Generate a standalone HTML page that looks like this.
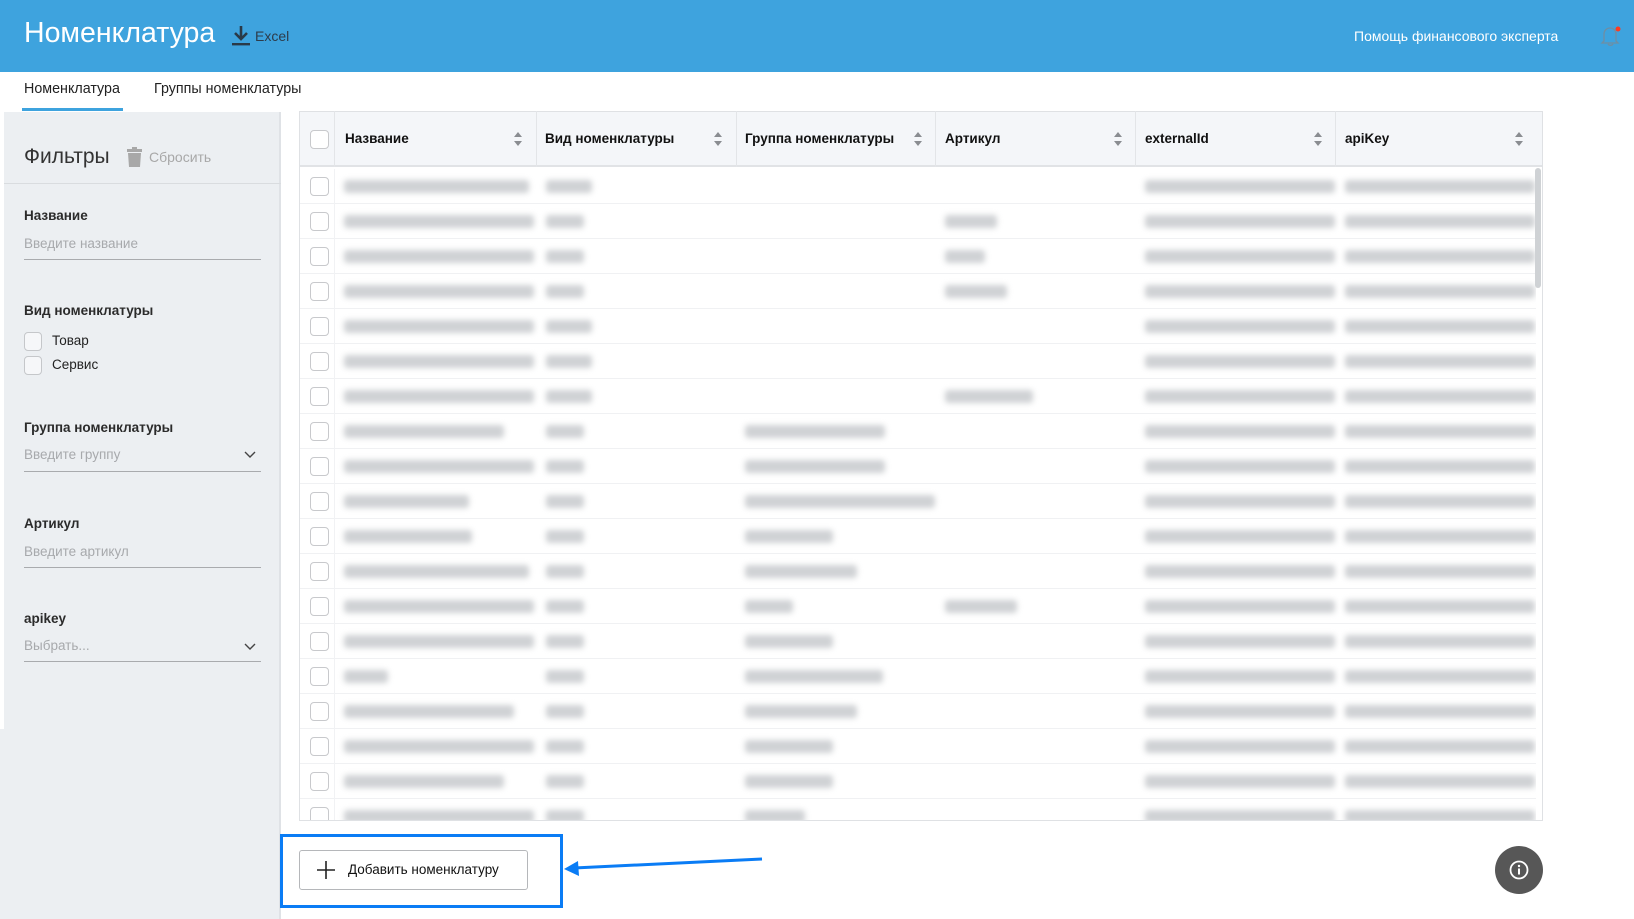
<!DOCTYPE html>
<html><head><meta charset="utf-8"><style>
*{box-sizing:border-box;margin:0;padding:0}
body{width:1634px;height:919px;position:relative;overflow:hidden;background:#fff;font-family:"Liberation Sans","DejaVu Sans",sans-serif;color:#222}
.a{position:absolute}
.hdr{left:0;top:0;width:1634px;height:72px;background:#3ea3de}
.lbl{font-size:13.5px;font-weight:bold;color:#2b2b2b}
.ph{font-size:13.5px;color:#a7a9ac}
.ul{height:1px;background:#a9abae;width:237px;left:24px}
.cb{width:19px;height:19px;border:1.5px solid #c8c9cc;border-radius:4px;background:#fff}
.sb{width:18px;height:19px;border:1.5px solid #c5c7ca;border-radius:4px;background:#f6f7f9}
.th{font-size:13.5px;font-weight:bold;color:#111;top:131px}
.sort{width:10px;height:16px;top:131px}
.bar{position:absolute;height:13px;background:#a9adb2;filter:blur(3px);opacity:.55;border-radius:3px}
.vl{position:absolute;top:111px;width:1px;height:56px;background:#e3e5e8}
</style></head><body>
<div class="a hdr"></div>
<div class="a" style="left:24px;top:17px;font-size:28.5px;color:#fff">Номенклатура</div>
<svg class="a" style="left:230px;top:25px" width="22" height="22" viewBox="0 0 22 22"><path d="M11 1v13M5 8l6 6 6-6" stroke="#2a3a48" stroke-width="2.6" fill="none"/><rect x="2" y="18" width="18" height="2.4" fill="#2a3a48"/></svg>
<div class="a" style="left:255px;top:28px;font-size:14px;color:#2d3c4b">Excel</div>
<div class="a" style="left:1354px;top:28px;font-size:14px;color:#fff">Помощь финансового эксперта</div>
<svg class="a" style="left:1600px;top:24px" width="22" height="24" viewBox="0 0 22 24"><path d="M4 17V10a6 6 0 0 1 12 0v7l2 2H2z M8 20a3 3 0 0 0 5 0" stroke="#6f8ea3" stroke-width="1.3" fill="none"/><circle cx="18" cy="5" r="2.5" fill="#ff3b1f"/></svg>

<div class="a" style="left:24px;top:81px;font-size:14.3px;color:#222">Номенклатура</div>
<div class="a" style="left:22px;top:108px;width:101px;height:3px;background:#3ea3de"></div>
<div class="a" style="left:154px;top:81px;font-size:14.3px;color:#222">Группы номенклатуры</div>

<div class="a" style="left:0;top:112px;width:281px;height:807px;background:#eceff2;border-right:2px solid #dfe2e6"></div>
<div class="a" style="left:0;top:112px;width:4px;height:617px;background:#fff"></div>
<div class="a" style="left:24px;top:145px;font-size:21px;color:#333">Фильтры</div>
<svg class="a" style="left:126px;top:147px" width="17" height="20" viewBox="0 0 17 20"><rect x="1" y="2" width="15" height="3" fill="#a8a8a8"/><rect x="6" y="0" width="5" height="2" fill="#a8a8a8"/><path d="M2 6h13l-1 14H3z" fill="#a8a8a8"/></svg>
<div class="a" style="left:149px;top:149px;font-size:14px;color:#a8a8a8">Сбросить</div>
<div class="a" style="left:4px;top:183px;width:277px;height:1px;background:#d9dcdf"></div>

<div class="a lbl" style="left:24px;top:208px">Название</div>
<div class="a ph" style="left:24px;top:236px">Введите название</div>
<div class="a ul" style="top:259px"></div>
<div class="a lbl" style="left:24px;top:303px">Вид номенклатуры</div>
<div class="a sb" style="left:24px;top:332px"></div><div class="a" style="left:52px;top:333px;font-size:13.5px">Товар</div>
<div class="a sb" style="left:24px;top:356px"></div><div class="a" style="left:52px;top:357px;font-size:13.5px">Сервис</div>
<div class="a lbl" style="left:24px;top:420px">Группа номенклатуры</div>
<div class="a ph" style="left:24px;top:447px">Введите группу</div>
<svg class="a" style="left:244px;top:451px" width="12" height="8"><path d="M1 1l5 5 5-5" stroke="#444" stroke-width="1.4" fill="none"/></svg>
<div class="a ul" style="top:471px"></div>
<div class="a lbl" style="left:24px;top:516px">Артикул</div>
<div class="a ph" style="left:24px;top:544px">Введите артикул</div>
<div class="a ul" style="top:567px"></div>
<div class="a lbl" style="left:24px;top:611px">apikey</div>
<div class="a ph" style="left:24px;top:638px">Выбрать...</div>
<svg class="a" style="left:244px;top:643px" width="12" height="8"><path d="M1 1l5 5 5-5" stroke="#444" stroke-width="1.4" fill="none"/></svg>
<div class="a ul" style="top:661px"></div>

<!-- table -->
<div class="a" style="left:299px;top:111px;width:1244px;height:710px;border:1px solid #dfe1e4;background:#fff;overflow:hidden">
<div class="a" style="left:0;top:0;width:1244px;height:55px;background:#f4f6f9;border-bottom:2px solid #e1e3e6"></div>
</div>
<div class="vl" style="left:334px"></div><div class="vl" style="left:536px"></div><div class="vl" style="left:736px"></div><div class="vl" style="left:935px"></div><div class="vl" style="left:1135px"></div><div class="vl" style="left:1335px"></div>
<div class="a cb" style="left:310px;top:130px"></div>
<div class="a th" style="left:345px">Название</div>
<div class="a th" style="left:545px">Вид номенклатуры</div>
<div class="a th" style="left:745px">Группа номенклатуры</div>
<div class="a th" style="left:945px">Артикул</div>
<div class="a th" style="left:1145px">externalId</div>
<div class="a th" style="left:1345px">apiKey</div>
<svg width="0" height="0" style="position:absolute"><defs><g id="s"><path d="M1 6l4-5 4 5z M1 10l4 5 4-5z" fill="#8a8d91"/></g></defs></svg>
<svg class="a sort" style="left:513px"><use href="#s"/></svg>
<svg class="a sort" style="left:713px"><use href="#s"/></svg>
<svg class="a sort" style="left:913px"><use href="#s"/></svg>
<svg class="a sort" style="left:1113px"><use href="#s"/></svg>
<svg class="a sort" style="left:1313px"><use href="#s"/></svg>
<svg class="a sort" style="left:1514px"><use href="#s"/></svg>

<div class="a" style="left:300px;top:169px;width:1236px;height:651px;overflow:hidden;background:repeating-linear-gradient(to bottom,transparent 0,transparent 34px,#f0f1f3 34px,#f0f1f3 35px)">
<div class="a" style="left:34px;top:0;width:1px;height:700px;background:#f1f2f4"></div>
</div>
<div class="a" style="left:300px;top:169px;width:1236px;height:651px;overflow:hidden" id="rows">
<div style="position:absolute;left:0;top:0">
<div class="a cb" style="left:10px;top:8px"></div><div class="bar" style="left:44px;top:11px;width:185px"></div><div class="bar" style="left:246px;top:11px;width:46px"></div><div class="bar" style="left:845px;top:11px;width:190px"></div><div class="bar" style="left:1045px;top:11px;width:190px"></div>
</div>
<div style="position:absolute;left:0;top:35px">
<div class="a cb" style="left:10px;top:8px"></div><div class="bar" style="left:44px;top:11px;width:190px"></div><div class="bar" style="left:246px;top:11px;width:38px"></div><div class="bar" style="left:645px;top:11px;width:52px"></div><div class="bar" style="left:845px;top:11px;width:190px"></div><div class="bar" style="left:1045px;top:11px;width:190px"></div>
</div>
<div style="position:absolute;left:0;top:70px">
<div class="a cb" style="left:10px;top:8px"></div><div class="bar" style="left:44px;top:11px;width:190px"></div><div class="bar" style="left:246px;top:11px;width:38px"></div><div class="bar" style="left:645px;top:11px;width:40px"></div><div class="bar" style="left:845px;top:11px;width:190px"></div><div class="bar" style="left:1045px;top:11px;width:190px"></div>
</div>
<div style="position:absolute;left:0;top:105px">
<div class="a cb" style="left:10px;top:8px"></div><div class="bar" style="left:44px;top:11px;width:190px"></div><div class="bar" style="left:246px;top:11px;width:38px"></div><div class="bar" style="left:645px;top:11px;width:62px"></div><div class="bar" style="left:845px;top:11px;width:190px"></div><div class="bar" style="left:1045px;top:11px;width:190px"></div>
</div>
<div style="position:absolute;left:0;top:140px">
<div class="a cb" style="left:10px;top:8px"></div><div class="bar" style="left:44px;top:11px;width:190px"></div><div class="bar" style="left:246px;top:11px;width:46px"></div><div class="bar" style="left:845px;top:11px;width:190px"></div><div class="bar" style="left:1045px;top:11px;width:190px"></div>
</div>
<div style="position:absolute;left:0;top:175px">
<div class="a cb" style="left:10px;top:8px"></div><div class="bar" style="left:44px;top:11px;width:190px"></div><div class="bar" style="left:246px;top:11px;width:46px"></div><div class="bar" style="left:845px;top:11px;width:190px"></div><div class="bar" style="left:1045px;top:11px;width:190px"></div>
</div>
<div style="position:absolute;left:0;top:210px">
<div class="a cb" style="left:10px;top:8px"></div><div class="bar" style="left:44px;top:11px;width:190px"></div><div class="bar" style="left:246px;top:11px;width:46px"></div><div class="bar" style="left:645px;top:11px;width:88px"></div><div class="bar" style="left:845px;top:11px;width:190px"></div><div class="bar" style="left:1045px;top:11px;width:190px"></div>
</div>
<div style="position:absolute;left:0;top:245px">
<div class="a cb" style="left:10px;top:8px"></div><div class="bar" style="left:44px;top:11px;width:160px"></div><div class="bar" style="left:246px;top:11px;width:38px"></div><div class="bar" style="left:445px;top:11px;width:140px"></div><div class="bar" style="left:845px;top:11px;width:190px"></div><div class="bar" style="left:1045px;top:11px;width:190px"></div>
</div>
<div style="position:absolute;left:0;top:280px">
<div class="a cb" style="left:10px;top:8px"></div><div class="bar" style="left:44px;top:11px;width:190px"></div><div class="bar" style="left:246px;top:11px;width:38px"></div><div class="bar" style="left:445px;top:11px;width:140px"></div><div class="bar" style="left:845px;top:11px;width:190px"></div><div class="bar" style="left:1045px;top:11px;width:190px"></div>
</div>
<div style="position:absolute;left:0;top:315px">
<div class="a cb" style="left:10px;top:8px"></div><div class="bar" style="left:44px;top:11px;width:125px"></div><div class="bar" style="left:246px;top:11px;width:38px"></div><div class="bar" style="left:445px;top:11px;width:190px"></div><div class="bar" style="left:845px;top:11px;width:190px"></div><div class="bar" style="left:1045px;top:11px;width:190px"></div>
</div>
<div style="position:absolute;left:0;top:350px">
<div class="a cb" style="left:10px;top:8px"></div><div class="bar" style="left:44px;top:11px;width:128px"></div><div class="bar" style="left:246px;top:11px;width:38px"></div><div class="bar" style="left:445px;top:11px;width:88px"></div><div class="bar" style="left:845px;top:11px;width:190px"></div><div class="bar" style="left:1045px;top:11px;width:190px"></div>
</div>
<div style="position:absolute;left:0;top:385px">
<div class="a cb" style="left:10px;top:8px"></div><div class="bar" style="left:44px;top:11px;width:185px"></div><div class="bar" style="left:246px;top:11px;width:38px"></div><div class="bar" style="left:445px;top:11px;width:112px"></div><div class="bar" style="left:845px;top:11px;width:190px"></div><div class="bar" style="left:1045px;top:11px;width:190px"></div>
</div>
<div style="position:absolute;left:0;top:420px">
<div class="a cb" style="left:10px;top:8px"></div><div class="bar" style="left:44px;top:11px;width:190px"></div><div class="bar" style="left:246px;top:11px;width:38px"></div><div class="bar" style="left:445px;top:11px;width:48px"></div><div class="bar" style="left:645px;top:11px;width:72px"></div><div class="bar" style="left:845px;top:11px;width:190px"></div><div class="bar" style="left:1045px;top:11px;width:190px"></div>
</div>
<div style="position:absolute;left:0;top:455px">
<div class="a cb" style="left:10px;top:8px"></div><div class="bar" style="left:44px;top:11px;width:190px"></div><div class="bar" style="left:246px;top:11px;width:38px"></div><div class="bar" style="left:445px;top:11px;width:88px"></div><div class="bar" style="left:845px;top:11px;width:190px"></div><div class="bar" style="left:1045px;top:11px;width:190px"></div>
</div>
<div style="position:absolute;left:0;top:490px">
<div class="a cb" style="left:10px;top:8px"></div><div class="bar" style="left:44px;top:11px;width:44px"></div><div class="bar" style="left:246px;top:11px;width:38px"></div><div class="bar" style="left:445px;top:11px;width:138px"></div><div class="bar" style="left:845px;top:11px;width:190px"></div><div class="bar" style="left:1045px;top:11px;width:190px"></div>
</div>
<div style="position:absolute;left:0;top:525px">
<div class="a cb" style="left:10px;top:8px"></div><div class="bar" style="left:44px;top:11px;width:170px"></div><div class="bar" style="left:246px;top:11px;width:38px"></div><div class="bar" style="left:445px;top:11px;width:112px"></div><div class="bar" style="left:845px;top:11px;width:190px"></div><div class="bar" style="left:1045px;top:11px;width:190px"></div>
</div>
<div style="position:absolute;left:0;top:560px">
<div class="a cb" style="left:10px;top:8px"></div><div class="bar" style="left:44px;top:11px;width:190px"></div><div class="bar" style="left:246px;top:11px;width:38px"></div><div class="bar" style="left:445px;top:11px;width:88px"></div><div class="bar" style="left:845px;top:11px;width:190px"></div><div class="bar" style="left:1045px;top:11px;width:190px"></div>
</div>
<div style="position:absolute;left:0;top:595px">
<div class="a cb" style="left:10px;top:8px"></div><div class="bar" style="left:44px;top:11px;width:160px"></div><div class="bar" style="left:246px;top:11px;width:38px"></div><div class="bar" style="left:445px;top:11px;width:88px"></div><div class="bar" style="left:845px;top:11px;width:190px"></div><div class="bar" style="left:1045px;top:11px;width:190px"></div>
</div>
<div style="position:absolute;left:0;top:630px">
<div class="a cb" style="left:10px;top:8px"></div><div class="bar" style="left:44px;top:11px;width:190px"></div><div class="bar" style="left:246px;top:11px;width:38px"></div><div class="bar" style="left:445px;top:11px;width:60px"></div><div class="bar" style="left:845px;top:11px;width:190px"></div><div class="bar" style="left:1045px;top:11px;width:190px"></div>
</div>
</div>
<div class="a" style="left:1535px;top:168px;width:6px;height:120px;background:#cfd2d5;border-radius:3px"></div>

<!-- bottom -->
<div class="a" style="left:280px;top:834px;width:283px;height:74px;border:3px solid #0a7cf5"></div>
<div class="a" style="left:299px;top:850px;width:229px;height:40px;border:1px solid #b5b7ba;border-radius:3px;background:#fff"></div>
<svg class="a" style="left:316px;top:860px" width="20" height="20"><path d="M10 1v18M1 10h18" stroke="#222" stroke-width="1.6"/></svg>
<div class="a" style="left:348px;top:862px;font-size:13.5px;color:#111">Добавить номенклатуру</div>
<svg class="a" style="left:560px;top:850px" width="210" height="30"><path d="M202 9L14 18" stroke="#0a7cf5" stroke-width="3"/><path d="M4 19l14-8 1 15z" fill="#0a7cf5"/></svg>
<div class="a" style="left:1495px;top:846px;width:48px;height:48px;border-radius:50%;background:#575757"></div>
<svg class="a" style="left:1508px;top:859px" width="22" height="22"><circle cx="11" cy="11" r="8.5" stroke="#fff" stroke-width="1.8" fill="none"/><rect x="10" y="9.5" width="2" height="6" fill="#fff"/><circle cx="11" cy="7" r="1.2" fill="#fff"/></svg>
</body></html>
